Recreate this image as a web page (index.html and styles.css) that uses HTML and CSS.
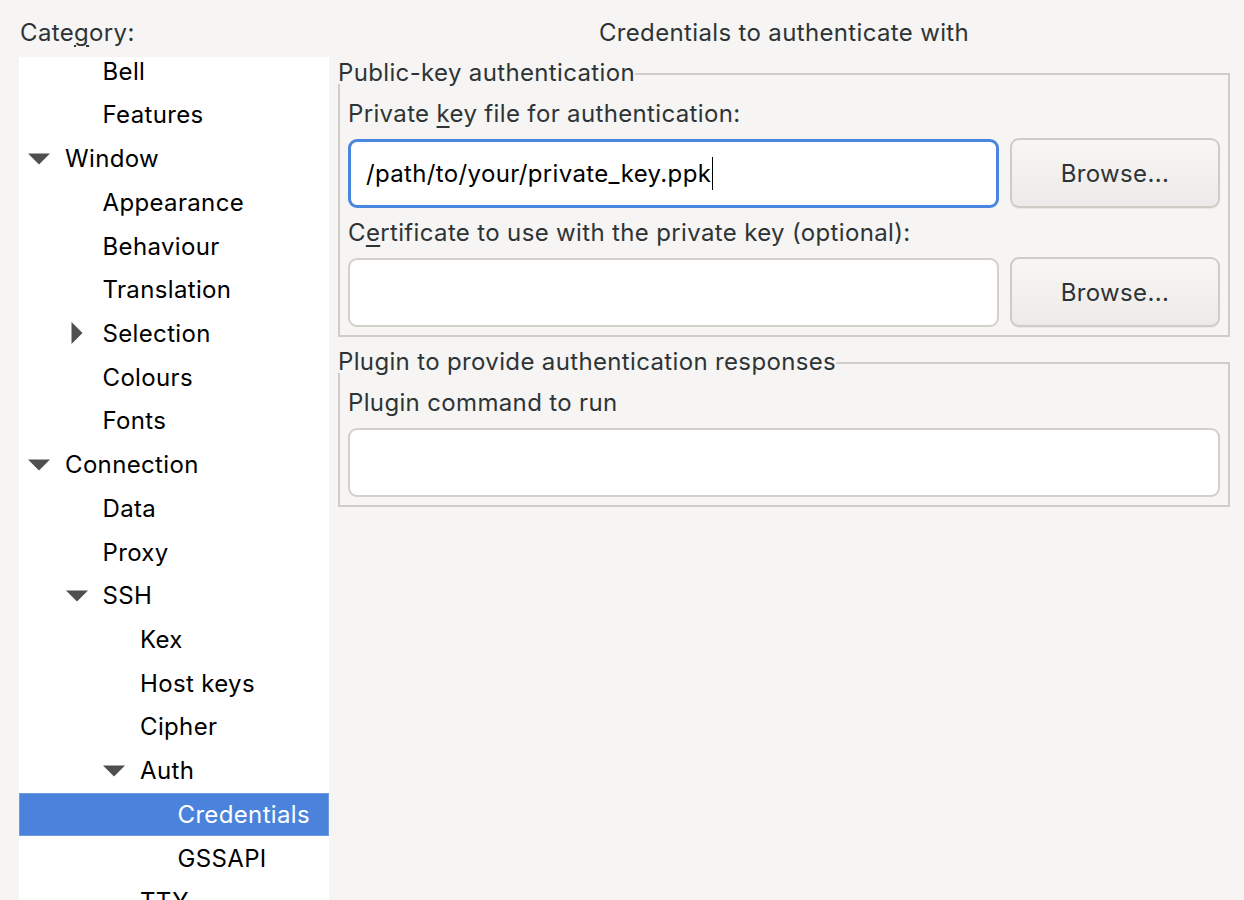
FILE: index.html
```
<!DOCTYPE html>
<html>
<head>
<meta charset="utf-8">
<link rel="stylesheet" href="styles.css">
</head>
<body>
<div class="window">
  <div class="sidebar">
    <div class="cat-label">Cate<u>g</u>ory:</div>
    <div class="tree">
      <div class="tree-inner">
        <div class="row l1"><span class="arrow"></span><span>Bell</span></div>
        <div class="row l1"><span class="arrow"></span><span>Features</span></div>
        <div class="row l0"><svg class="arrow" viewBox="0 0 22 22"><polygon points="0,5.5 22,5.5 11,16.5"/></svg><span>Window</span></div>
        <div class="row l1"><span class="arrow"></span><span>Appearance</span></div>
        <div class="row l1"><span class="arrow"></span><span>Behaviour</span></div>
        <div class="row l1"><span class="arrow"></span><span>Translation</span></div>
        <div class="row l1"><svg class="arrow" viewBox="0 0 22 22"><polygon points="5.5,0 16.5,11 5.5,22"/></svg><span>Selection</span></div>
        <div class="row l1"><span class="arrow"></span><span>Colours</span></div>
        <div class="row l1"><span class="arrow"></span><span>Fonts</span></div>
        <div class="row l0"><svg class="arrow" viewBox="0 0 22 22"><polygon points="0,5.5 22,5.5 11,16.5"/></svg><span>Connection</span></div>
        <div class="row l1"><span class="arrow"></span><span>Data</span></div>
        <div class="row l1"><span class="arrow"></span><span>Proxy</span></div>
        <div class="row l1"><svg class="arrow" viewBox="0 0 22 22"><polygon points="0,5.5 22,5.5 11,16.5"/></svg><span>SSH</span></div>
        <div class="row l2"><span class="arrow"></span><span>Kex</span></div>
        <div class="row l2"><span class="arrow"></span><span>Host keys</span></div>
        <div class="row l2"><span class="arrow"></span><span>Cipher</span></div>
        <div class="row l2"><svg class="arrow" viewBox="0 0 22 22"><polygon points="0,5.5 22,5.5 11,16.5"/></svg><span>Auth</span></div>
        <div class="row l3 selected"><span class="arrow"></span><span>Credentials</span></div>
        <div class="row l3"><span class="arrow"></span><span>GSSAPI</span></div>
        <div class="row l2"><span class="arrow"></span><span>TTY</span></div>
      </div>
    </div>
  </div>

  <div class="main">
    <div class="title">Credentials to authenticate with</div>

    <div class="frame">
      <div class="frame-head"><span class="frame-title">Public-key authentication</span><span class="frame-rule"></span></div>
      <div class="frame-body">
        <div class="label">Private <u>k</u>ey file for authentication:</div>
        <div class="entry-row">
          <div class="entry focused"><span>/path/to/your/private_key.ppk</span><span class="caret"></span></div>
          <div class="button">Browse...</div>
        </div>
        <div class="label">C<u>e</u>rtificate to use with the private key (optional):</div>
        <div class="entry-row">
          <div class="entry"></div>
          <div class="button">Browse...</div>
        </div>
      </div>
    </div>

    <div class="frame">
      <div class="frame-head"><span class="frame-title">Plugin to provide authentication responses</span><span class="frame-rule"></span></div>
      <div class="frame-body">
        <div class="label">Plugin command to run</div>
        <div class="entry"></div>
      </div>
    </div>
  </div>
</div>
</body>
</html>
```
FILE: styles.css
```
* { box-sizing: border-box; }
html, body { margin: 0; padding: 0; }
body {
  background: #f6f5f4;
  font-family: Inter, "Noto Sans", sans-serif;
  font-size: 24px;
  letter-spacing: 0.35px;
  color: #2e3436;
  overflow: hidden;
  height: 900px;
}
u {
  text-decoration-thickness: 2px;
  text-underline-offset: 4px;
}
.window {
  display: grid;
  grid-template-columns: 310px 892px;
  column-gap: 9px;
  padding: 18px 0 0 19px;
  height: 900px;
}
.sidebar {
  display: flex;
  flex-direction: column;
  min-height: 0;
}
.cat-label {
  line-height: 30px;
  height: 30px;
  margin-left: 1px;
}
.tree {
  margin-top: 8.7px;
  background: #fff;
  flex: 1;
  overflow: hidden;
  color: #000;
}
.tree-inner { margin-top: -7.4px; }
.row {
  height: 43.72px;
  display: flex;
  align-items: center;
  white-space: nowrap;
}
.l0 { padding-left: 9px; }
.l1 { padding-left: 46.5px; }
.l2 { padding-left: 84px; }
.l3 { padding-left: 121.5px; }
.arrow {
  width: 22px;
  height: 22px;
  flex: none;
  margin-right: 15px;
  display: block;
}
.arrow polygon { fill: #4f4f4f; }
.selected {
  background: #4a82dc;
  color: #fff;
  box-shadow: inset 0 0 0 1px #6f9be4;
}
.main {
  display: flex;
  flex-direction: column;
  gap: 14px;
}
.title {
  text-align: center;
  line-height: 30px;
  height: 30px;
}
.frame-head {
  display: flex;
  height: 22px;
}
.frame-title {
  line-height: 22px;
  white-space: nowrap;
}
.frame-rule {
  flex: 1;
  align-self: flex-end;
  height: 11px;
  border-top: 2px solid #d0ccc7;
  border-right: 2px solid #d0ccc7;
}
.frame-body {
  border: 2px solid #d0ccc7;
  border-top: 0;
  padding: 15px 8px 8px 8px;
  display: flex;
  flex-direction: column;
  gap: 10px;
}
.label {
  line-height: 30px;
  height: 30px;
  white-space: nowrap;
}
.entry-row {
  display: grid;
  grid-template-columns: 1fr 210px;
  column-gap: 11px;
}
.entry {
  height: 69px;
  background: #fff;
  border: 2px solid #d3cfca;
  border-radius: 9px;
  display: flex;
  align-items: center;
  padding-left: 16px;
  color: #000;
}
.entry.focused {
  border: 3px solid #4a85df;
  padding-left: 15px;
}
.caret {
  display: inline-block;
  width: 0;
  height: 33px;
  border-left: 1.5px solid #000;
  margin-left: 1px;
}
.button {
  height: 70px;
  margin-top: -1px;
  border: 2px solid #d1cbc6;
  border-radius: 9px;
  background: linear-gradient(#f7f6f5, #edebe9);
  box-shadow: 0 1px 1px rgba(0,0,0,0.06);
  display: flex;
  align-items: center;
  justify-content: center;
  color: #2e3436;
}
```
